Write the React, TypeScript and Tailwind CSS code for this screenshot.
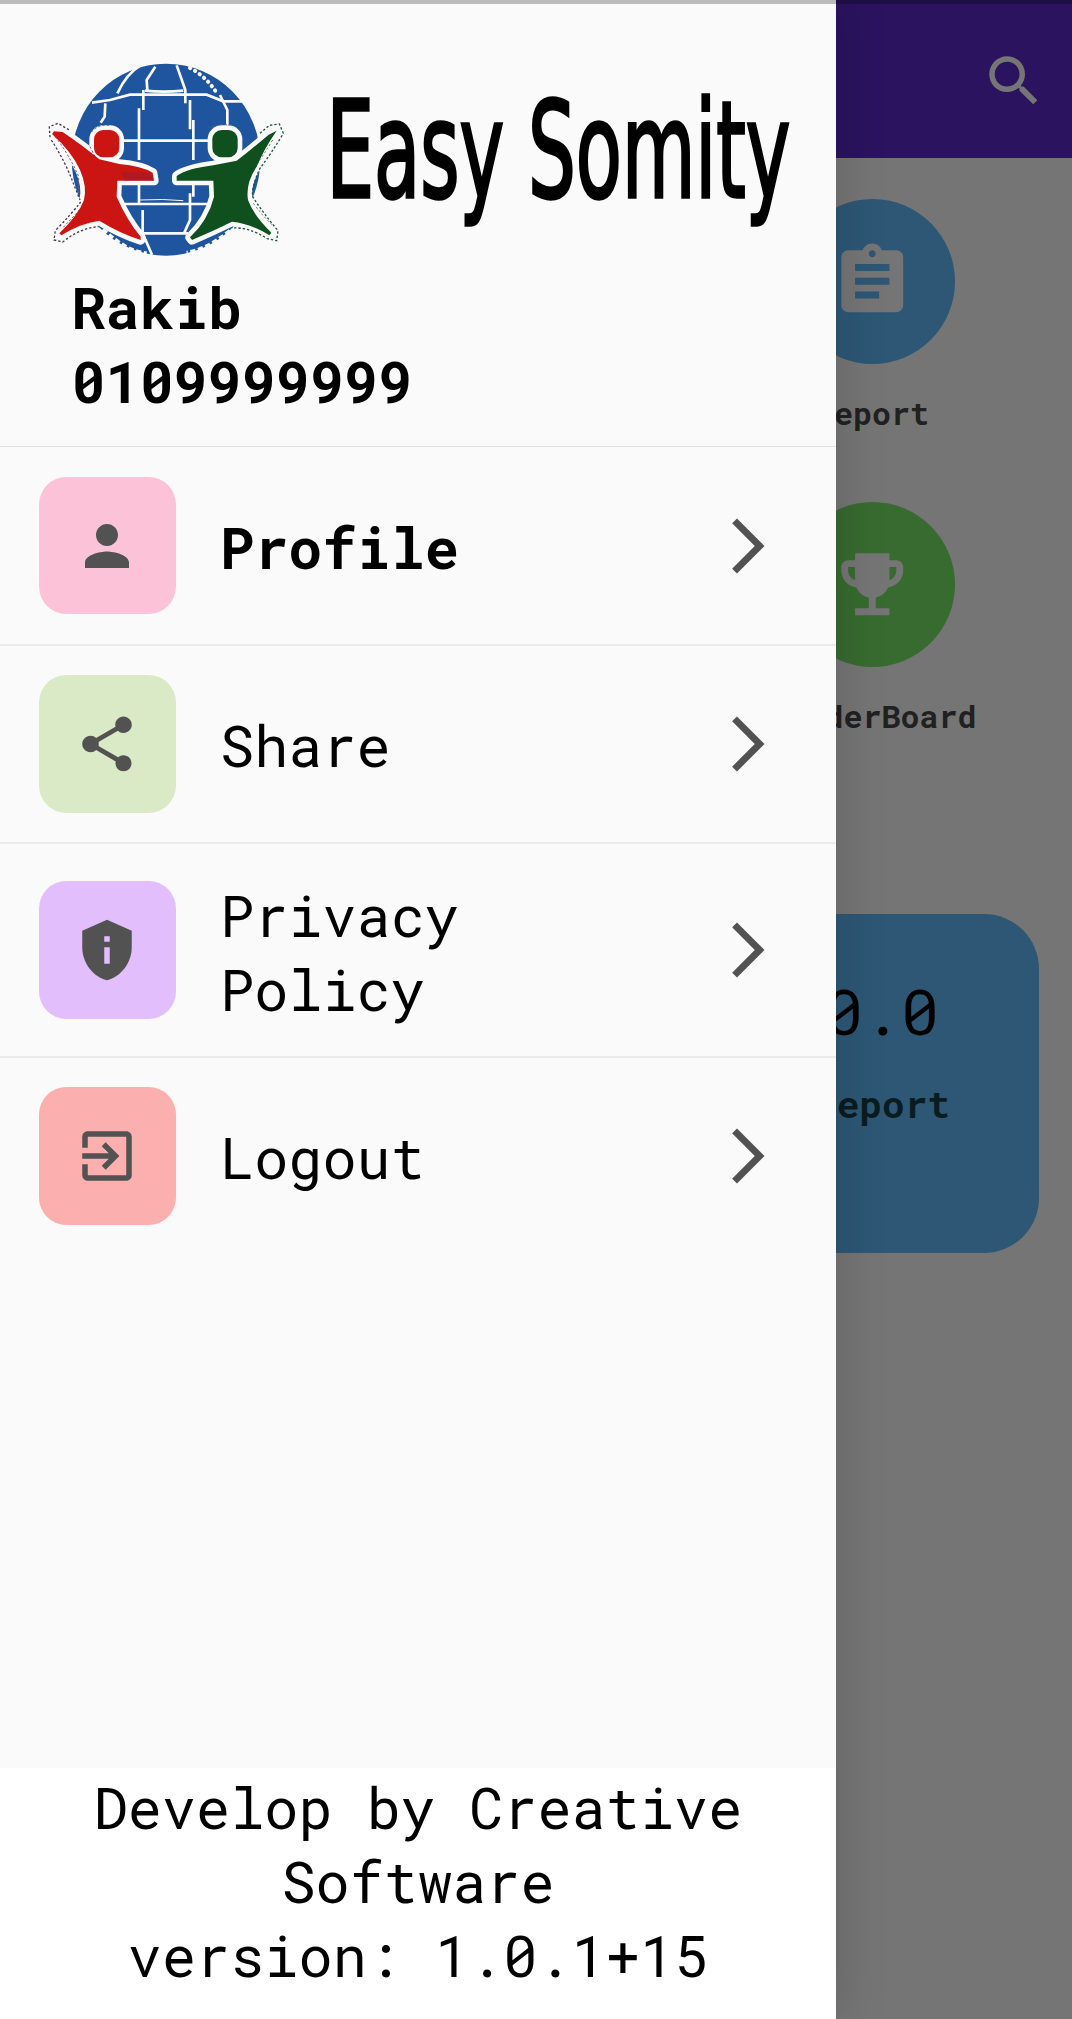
import React from 'react';

const PATHS = {
  person: 'M12 12c2.21 0 4-1.79 4-4s-1.79-4-4-4-4 1.79-4 4 1.79 4 4 4zm0 2c-2.67 0-8 1.34-8 4v2h16v-2c0-2.66-5.33-4-8-4z',
  share: 'M18 16.08c-.76 0-1.44.3-1.96.77L8.91 12.7c.05-.23.09-.46.09-.7s-.04-.47-.09-.7l7.05-4.11c.54.5 1.25.81 2.04.81 1.66 0 3-1.34 3-3s-1.34-3-3-3-3 1.34-3 3c0 .24.04.47.09.7L8.04 9.81C7.5 9.31 6.79 9 6 9c-1.66 0-3 1.34-3 3s1.34 3 3 3c.79 0 1.5-.31 2.04-.81l7.12 4.16c-.05.21-.08.43-.08.65 0 1.61 1.31 2.92 2.92 2.92s2.92-1.31 2.92-2.92-1.31-2.92-2.92-2.92z',
  privacy: 'M12 1L3 5v6c0 5.55 3.84 10.74 9 12 5.16-1.26 9-6.45 9-12V5l-9-4zm-1 6h2v2h-2V7zm0 4h2v6h-2v-6z',
  logout: 'M10.09 15.59L11.5 17l5-5-5-5-1.41 1.41L12.67 11H3v2h9.67l-2.58 2.59zM19 3H5c-1.11 0-2 .9-2 2v4h2V5h14v14H5v-4H3v4c0 1.1.89 2 2 2h14c1.1 0 2-.9 2-2V5c0-1.1-.9-2-2-2z',
  chevron: 'M6.23 20.23L8 22l10-10L8 2 6.23 3.77 14.46 12z',
  search: 'M15.5 14h-.79l-.28-.27C15.41 12.59 16 11.11 16 9.5 16 5.91 13.09 3 9.5 3S3 5.91 3 9.5 5.91 16 9.5 16c1.61 0 3.09-.59 4.23-1.57l.27.28v.79l5 4.99L20.49 19l-4.99-5zm-6 0C7.01 14 5 11.99 5 9.5S7.01 5 9.5 5 14 7.01 14 9.5 11.99 14 9.5 14z',
  report: 'M19 3h-4.18C14.4 1.84 13.3 1 12 1c-1.3 0-2.4.84-2.82 2H5c-1.1 0-2 .9-2 2v14c0 1.1.9 2 2 2h14c1.1 0 2-.9 2-2V5c0-1.1-.9-2-2-2zm-7 0c.55 0 1 .45 1 1s-.45 1-1 1-1-.45-1-1 .45-1 1-1zm2 14H7v-2h7v2zm3-4H7v-2h10v2zm0-4H7V7h10v2z',
  trophy: 'M19 5h-2V3H7v2H5c-1.1 0-2 .9-2 2v1c0 2.55 1.92 4.63 4.39 4.94.63 1.5 1.98 2.63 3.61 2.96V19H7v2h10v-2h-4v-3.1c1.63-.33 2.98-1.46 3.61-2.96C19.08 12.63 21 10.55 21 8V7c0-1.1-.9-2-2-2zM5 8V7h2v3.82C5.84 10.4 5 9.3 5 8zm14 0c0 1.3-.84 2.4-2 2.82V7h2v1z',
};

function Icon({ name, className }: { name: keyof typeof PATHS; className: string }) {
  return (
    <svg viewBox="0 0 24 24" fill="currentColor" className={`shrink-0 ${className}`}>
      <path d={PATHS[name]} />
    </svg>
  );
}

const RED_BODY =
  'M66 282L72 274L98 276Q160 318 208 358L268 372Q335 378 368 398L372 422H262L260 470Q290 540 332 590L332 600Q270 580 208 542Q150 550 94 586L88 580Q145 525 162 480Q172 440 150 390Q125 335 66 282Z';
const GREEN_BODY =
  'M740 272L716 284Q650 340 620 362L550 376Q470 386 440 408L440 422H550L552 470Q535 540 480 592L486 600Q545 575 606 545Q660 550 718 586L724 578Q670 525 654 480Q646 430 680 380Q700 330 740 272Z';

function Logo() {
  return (
    <svg viewBox="0 0 810 690" className="h-[230px] w-[270px] shrink-0">
      <ellipse cx="408" cy="359" rx="283" ry="288" fill="#1f559e" />
      <g fill="none" stroke="#fafafa" strokeWidth="8">
        <path d="M376 80L350 120L352 150M340 150V210M327 205V360M327 435V495M338 510V580L366 644M440 76L466 150V190M480 180V268M490 240V360M490 430V470M480 460V540L462 580" />
        <path d="M332 76Q290 100 262 160M226 190L224 230L212 248M570 165L592 210V255" />
        <path d="M186 188L240 180L300 164H530L580 184H652M345 152Q400 158 460 152M270 302H540M264 492H545M330 580H475" />
        <path d="M330 480Q400 476 460 482" strokeWidth="3" />
        <path d="M480 84Q530 110 562 162" strokeWidth="12" strokeLinecap="round" strokeDasharray="1 16" />
        <path d="M336 74Q210 110 160 210" strokeWidth="5" strokeDasharray="9 12" />
        <path d="M218 568Q290 636 350 640M600 572Q530 630 470 638" strokeWidth="12" strokeDasharray="16 8" />
      </g>
      <g fill="none" stroke="#fafafa" strokeWidth="28" strokeLinejoin="round">
        <path d={RED_BODY} />
        <path d={GREEN_BODY} />
        <rect x="192" y="270" width="76" height="82" rx="28" />
        <rect x="547" y="270" width="76" height="82" rx="28" />
      </g>
      <g fill="none" strokeWidth="4" strokeDasharray="7 6">
        <path d="M60 292L58 260L84 250L118 270M64 300Q106 365 130 430L150 480M152 486Q126 520 76 572L72 600L98 606Q150 564 206 560" stroke="#4a3550" />
        <path d="M76 290Q118 345 146 410V460M158 500L96 566" stroke="#7b5a72" strokeWidth="3" />
        <path d="M690 280L718 256L748 252L760 280Q724 340 690 385Q664 440 668 470Q700 520 744 572L740 602L712 596Q655 560 606 564" stroke="#23553f" />
        <path d="M728 300Q700 345 682 372M670 490Q700 530 728 556" stroke="#5c8a75" strokeWidth="3" />
        <path d="M184 276Q206 252 240 256M180 320L196 352M545 262Q580 248 606 256" stroke="#6f5a80" strokeWidth="3" />
      </g>
      <g fill="#cb1512">
        <path d={RED_BODY} />
        <rect x="192" y="270" width="76" height="82" rx="28" />
      </g>
      <path d="M275 398Q330 392 370 404V422H285Z" fill="#8e2038" opacity=".45" />
      <g fill="#10501f">
        <path d={GREEN_BODY} />
        <rect x="547" y="270" width="76" height="82" rx="28" />
      </g>
    </svg>
  );
}

function Wordmark() {
  return (
    <svg viewBox="0 0 500 180" className="h-[180px] w-[500px] shrink-0">
      <text
        transform="translate(16.5 126.5) scale(.56 1)"
        fontFamily="'DejaVu Sans', sans-serif"
        fontSize="134.5"
        fill="#000"
        stroke="#000"
        strokeWidth="3.4"
      >
        Easy Somity
      </text>
    </svg>
  );
}

type ItemProps = { icon: keyof typeof PATHS; label: React.ReactNode; tile: string; row: string; text: string };

function Item({ icon, label, tile, row, text }: ItemProps) {
  return (
    <div className={`flex items-center pl-[38.5px] pr-[55px] ${row}`}>
      <div className={`flex size-[137.5px] shrink-0 items-center justify-center rounded-[27.5px] ${tile}`}>
        <Icon name={icon} className="size-[66px]" />
      </div>
      <div className={`ml-[44px] flex-1 text-black ${text}`}>{label}</div>
      <Icon name="chevron" className="size-[66px]" />
    </div>
  );
}

function Shortcut({ icon, label, tile }: { icon: keyof typeof PATHS; label: string; tile: string }) {
  return (
    <div className="flex w-[400px] flex-col items-center">
      <div className={`flex size-[165px] items-center justify-center rounded-full text-[#757575] ${tile}`}>
        <Icon name={icon} className="size-[82.5px]" />
      </div>
      <div className="mt-[28px] text-[31.7px] leading-[42px] font-bold text-[#212121]">{label}</div>
    </div>
  );
}

export default function App() {
  return (
    <div className="relative h-[2019px] w-[1072px] overflow-hidden bg-[#757575] font-['Roboto_Mono','DejaVu_Sans_Mono',monospace] text-black">
      <div className="h-1 bg-[#1d0f43]" />
      <header className="flex h-[154px] items-start justify-end bg-[#2b135f] pt-[44px] pr-[25px] text-[#757575]">
        <Icon name="search" className="size-[66px]" />
      </header>
      <main className="flex flex-col items-end">
        <div className="mt-[41px] flex h-[303px] flex-col">
          <Shortcut icon="report" label="Report" tile="bg-[#2d5775]" />
        </div>
        <div className="flex h-[412px] flex-col">
          <Shortcut icon="trophy" label="LeaderBoard" tile="bg-[#376b2f]" />
        </div>
        <section className="mr-[33px] flex h-[339px] w-[1006px] justify-end rounded-[55px] bg-[#2d5775] pt-[55px] pr-[57px]">
          <div className="flex w-[200px] flex-col items-center">
            <div className="text-[63.3px] leading-[84px]">0.0</div>
            <div className="mt-[25px] text-[37.8px] leading-[51px] font-bold text-[#0a1c20]">Report</div>
          </div>
        </section>
      </main>

      <aside className="absolute inset-y-0 left-0 flex w-[836px] flex-col bg-[#fafafa] text-[56.9px] leading-[74px] shadow-[0_0_48px_rgba(0,0,0,0.17)]">
        <div className="h-1 shrink-0 bg-[#bbbbbb]" />
        <div className="flex h-[234px] shrink-0 items-start pt-[36px] pl-[30px]">
          <Logo />
          <div className="mt-[30px] ml-[10px]">
            <Wordmark />
          </div>
        </div>
        <div className="h-[209px] shrink-0 border-b border-[#e0e0e0] pt-[32px] pl-[71.5px] font-bold">
          <div>Rakib</div>
          <div>0109999999</div>
        </div>
        <nav className="flex-1 divide-y-2 divide-[#ebebeb] text-[#525252]">
          <Item icon="person" label="Profile" tile="bg-[#fcc2d7]" row="h-[199px]" text="pt-[3px] font-bold" />
          <Item icon="share" label="Share" tile="bg-[#dbeac6]" row="h-[198px]" text="pt-px" />
          <Item icon="privacy" label={<>Privacy<br />Policy</>} tile="bg-[#e3befc]" row="h-[214px]" text="pt-1" />
          <Item icon="logout" label="Logout" tile="bg-[#fbafaf]" row="h-[196px]" text="pt-px" />
        </nav>
        <footer className="h-[251px] shrink-0 bg-white px-[55px] pt-[2px] text-center">
          Develop by Creative Software
          <br />
          version: 1.0.1+15
        </footer>
      </aside>
    </div>
  );
}
